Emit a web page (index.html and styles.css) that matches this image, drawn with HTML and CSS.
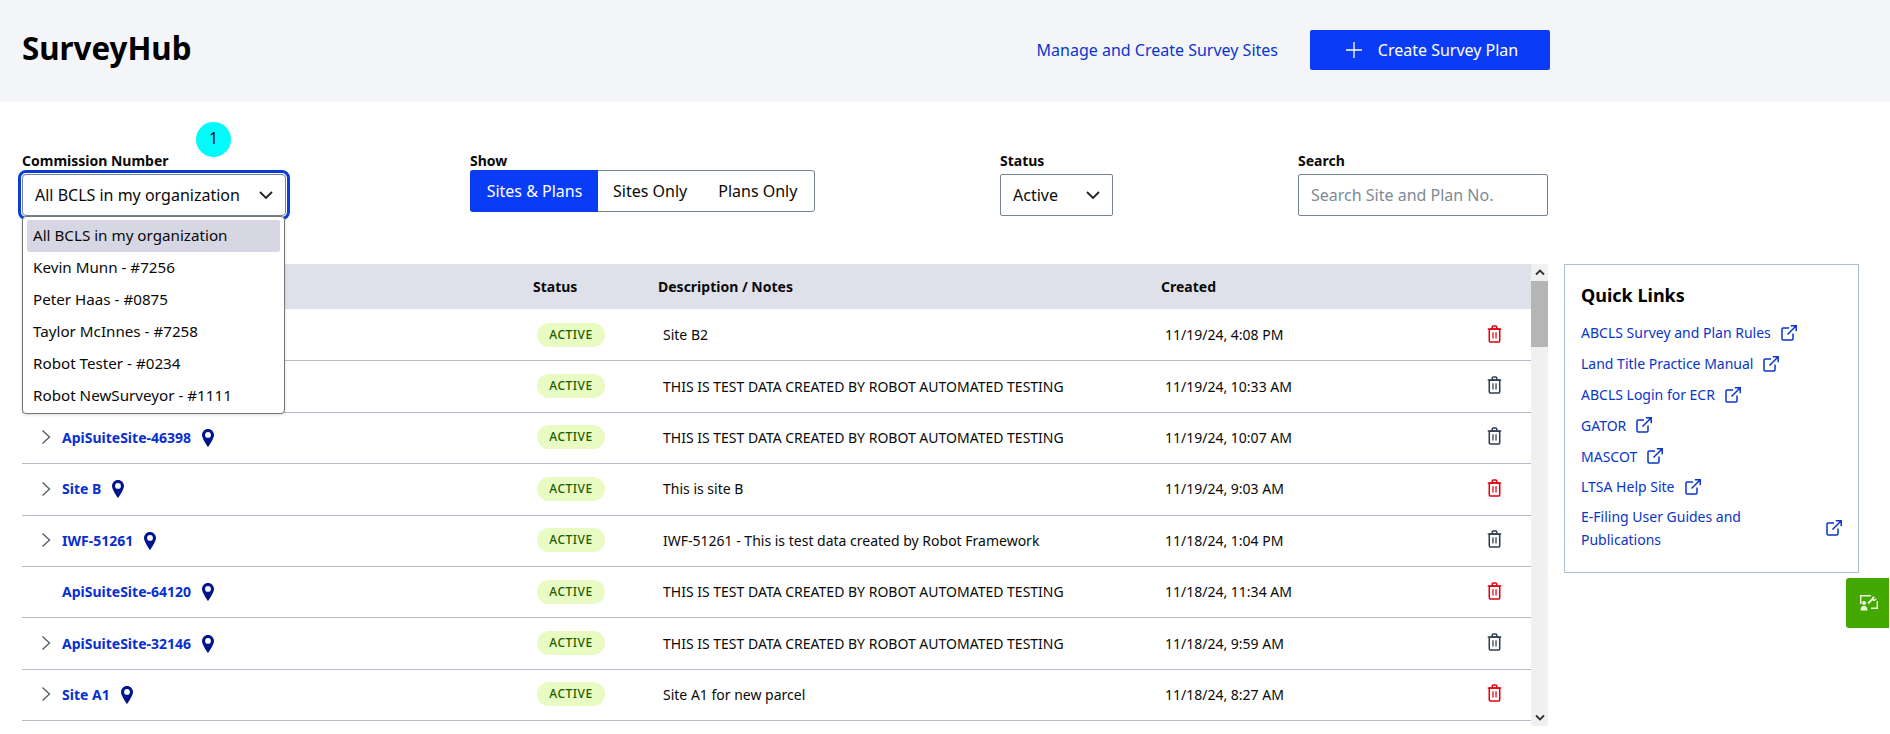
FILE: index.html
```html
<!DOCTYPE html>
<html lang="en">
<head>
  <meta charset="UTF-8">
  <title>SurveyHub</title>
  <link rel="stylesheet" href="styles.css">
</head>
<body>
  <!-- Shared icons -->
  <svg class="icon-defs" width="0" height="0">
    <symbol id="i-pin" viewBox="0 0 12 18">
      <path fill-rule="evenodd" d="M6 0C2.7 0 0 2.7 0 6c0 4 6 12 6 12s6-8 6-12c0-3.3-2.7-6-6-6zm0 8.800A2.900 2.900 0 1 1 6 3a2.900 2.900 0 0 1 0 5.800z"/>
    </symbol>
    <symbol id="i-caret" viewBox="0 0 10 16">
      <polyline points="1.5,1.5 8.5,8 1.5,14.5" fill="none" stroke="currentColor" stroke-width="1.4"/>
    </symbol>
    <symbol id="i-down" viewBox="0 0 14 8">
      <polyline points="1,1 7,7 13,1" fill="none" stroke="currentColor" stroke-width="1.8"/>
    </symbol>
    <symbol id="i-trash" viewBox="0 0 16 20">
      <g fill="none" stroke="currentColor" stroke-width="1.7">
        <path d="M0.5 4.5h15"/>
        <path d="M5.5 4V2.2Q5.5 1 6.7 1h2.6q1.200 0 1.200 1.200V4"/>
        <rect x="2.200" y="4.500" width="11.600" height="14.500" rx="1.600"/>
        <path d="M6.300 8v7M9.700 8v7" stroke-width="1.400"/>
      </g>
    </symbol>
    <symbol id="i-ext" viewBox="0 0 16 16">
      <g fill="none" stroke="currentColor" stroke-width="1.5">
        <path d="M8 3H2.200Q1 3 1 4.200v9.600Q1 15 2.200 15h8.600q1.200 0 1.200-1.200V8.500"/>
        <path d="M6.500 9.500L15 1M9.800 0.800H15.200V6.200"/>
      </g>
    </symbol>
  </svg>

  <!-- Header -->
  <header class="top-bar">
    <h1 class="brand">SurveyHub</h1>
    <div class="top-actions">
      <a class="top-link" href="#">Manage and Create Survey Sites</a>
      <button class="create-btn">
        <svg class="plus" viewBox="0 0 16 16"><path d="M8 0v16M0 8h16" stroke="currentColor" stroke-width="1.3"/></svg>
        Create Survey Plan
      </button>
    </div>
  </header>

  <main class="page">
    <!-- Filters -->
    <div class="filters">
      <div class="filter commission">
        <span class="tour-dot">1</span>
        <label class="filter-label">Commission Number</label>
        <div class="select open">
          <span>All BCLS in my organization</span>
          <svg class="select-arrow"><use href="#i-down"/></svg>
        </div>
        <ul class="dropdown">
          <li class="selected">All BCLS in my organization</li>
          <li>Kevin Munn - #7256</li>
          <li>Peter Haas - #0875</li>
          <li>Taylor McInnes - #7258</li>
          <li>Robot Tester - #0234</li>
          <li>Robot NewSurveyor - #1111</li>
        </ul>
      </div>
      <div class="filter">
        <label class="filter-label show-label">Show</label>
        <div class="toggle">
          <button class="toggle-btn active">Sites &amp; Plans</button>
          <button class="toggle-btn">Sites Only</button>
          <button class="toggle-btn">Plans Only</button>
        </div>
      </div>
      <div class="filter">
        <label class="filter-label">Status</label>
        <div class="select status-select">
          <span>Active</span>
          <svg class="select-arrow"><use href="#i-down"/></svg>
        </div>
      </div>
      <div class="filter">
        <label class="filter-label">Search</label>
        <input class="search" type="text" placeholder="Search Site and Plan No.">
      </div>
    </div>

    <div class="content">
      <!-- Sites table -->
      <section class="table-wrap">
        <div class="table">
          <div class="row head">
            <div></div>
            <div>Status</div>
            <div>Description / Notes</div>
            <div>Created</div>
            <div></div>
          </div>
          <!-- first two names sit behind the open dropdown -->
          <div class="row">
            <div class="name"></div>
            <div class="cell"><span class="badge">Active</span></div>
            <div class="cell">Site B2</div>
            <div class="cell">11/19/24, 4:08 PM</div>
            <div class="action"><svg class="trash red"><use href="#i-trash"/></svg></div>
          </div>
          <div class="row">
            <div class="name"></div>
            <div class="cell"><span class="badge">Active</span></div>
            <div class="cell">THIS IS TEST DATA CREATED BY ROBOT AUTOMATED TESTING</div>
            <div class="cell">11/19/24, 10:33 AM</div>
            <div class="action"><svg class="trash"><use href="#i-trash"/></svg></div>
          </div>
          <div class="row">
            <div class="name"><svg class="caret"><use href="#i-caret"/></svg><a href="#">ApiSuiteSite-46398</a><svg class="pin"><use href="#i-pin"/></svg></div>
            <div class="cell"><span class="badge">Active</span></div>
            <div class="cell">THIS IS TEST DATA CREATED BY ROBOT AUTOMATED TESTING</div>
            <div class="cell">11/19/24, 10:07 AM</div>
            <div class="action"><svg class="trash"><use href="#i-trash"/></svg></div>
          </div>
          <div class="row">
            <div class="name"><svg class="caret"><use href="#i-caret"/></svg><a href="#">Site B</a><svg class="pin"><use href="#i-pin"/></svg></div>
            <div class="cell"><span class="badge">Active</span></div>
            <div class="cell">This is site B</div>
            <div class="cell">11/19/24, 9:03 AM</div>
            <div class="action"><svg class="trash red"><use href="#i-trash"/></svg></div>
          </div>
          <div class="row">
            <div class="name"><svg class="caret"><use href="#i-caret"/></svg><a href="#">IWF-51261</a><svg class="pin"><use href="#i-pin"/></svg></div>
            <div class="cell"><span class="badge">Active</span></div>
            <div class="cell">IWF-51261 - This is test data created by Robot Framework</div>
            <div class="cell">11/18/24, 1:04 PM</div>
            <div class="action"><svg class="trash"><use href="#i-trash"/></svg></div>
          </div>
          <div class="row">
            <div class="name"><span class="caret"></span><a href="#">ApiSuiteSite-64120</a><svg class="pin"><use href="#i-pin"/></svg></div>
            <div class="cell"><span class="badge">Active</span></div>
            <div class="cell">THIS IS TEST DATA CREATED BY ROBOT AUTOMATED TESTING</div>
            <div class="cell">11/18/24, 11:34 AM</div>
            <div class="action"><svg class="trash red"><use href="#i-trash"/></svg></div>
          </div>
          <div class="row">
            <div class="name"><svg class="caret"><use href="#i-caret"/></svg><a href="#">ApiSuiteSite-32146</a><svg class="pin"><use href="#i-pin"/></svg></div>
            <div class="cell"><span class="badge">Active</span></div>
            <div class="cell">THIS IS TEST DATA CREATED BY ROBOT AUTOMATED TESTING</div>
            <div class="cell">11/18/24, 9:59 AM</div>
            <div class="action"><svg class="trash"><use href="#i-trash"/></svg></div>
          </div>
          <div class="row">
            <div class="name"><svg class="caret"><use href="#i-caret"/></svg><a href="#">Site A1</a><svg class="pin"><use href="#i-pin"/></svg></div>
            <div class="cell"><span class="badge">Active</span></div>
            <div class="cell">Site A1 for new parcel</div>
            <div class="cell">11/18/24, 8:27 AM</div>
            <div class="action"><svg class="trash red"><use href="#i-trash"/></svg></div>
          </div>
        </div>
        <div class="scrollbar">
          <svg class="scroll-arrow" viewBox="0 0 10 6"><polyline points="1,5 5,1 9,5" fill="none" stroke="#333" stroke-width="1.8"/></svg>
          <div class="scroll-track"><div class="scroll-thumb"></div></div>
          <svg class="scroll-arrow" viewBox="0 0 10 6"><polyline points="1,1 5,5 9,1" fill="none" stroke="#333" stroke-width="1.8"/></svg>
        </div>
      </section>

      <!-- Quick links -->
      <aside class="quick-links">
        <h3>Quick Links</h3>
        <a class="q-link" href="#">ABCLS Survey and Plan Rules<svg class="ext"><use href="#i-ext"/></svg></a>
        <a class="q-link" href="#">Land Title Practice Manual<svg class="ext"><use href="#i-ext"/></svg></a>
        <a class="q-link" href="#">ABCLS Login for ECR<svg class="ext"><use href="#i-ext"/></svg></a>
        <a class="q-link" href="#">GATOR<svg class="ext"><use href="#i-ext"/></svg></a>
        <a class="q-link" href="#">MASCOT<svg class="ext"><use href="#i-ext"/></svg></a>
        <a class="q-link" href="#">LTSA Help Site<svg class="ext"><use href="#i-ext"/></svg></a>
        <a class="q-link wrap" href="#"><span>E-Filing User Guides and<br>Publications</span><svg class="ext"><use href="#i-ext"/></svg></a>
      </aside>
    </div>
  </main>

  <!-- Floating support tab -->
  <button class="float-tab">
    <svg class="tab-icon" viewBox="0 0 18 16">
      <path fill="none" stroke="#edf8e0" stroke-width="1.4" d="M0.7 9V0.7H11M17.300 6V13.300H11"/>
      <path fill="none" stroke="#edf8e0" stroke-width="1.800" d="M8 8.500L13 3.500"/>
      <path fill="#edf8e0" d="M12 2.500a2.600 2.600 0 0 1 3.200-.8l-1.700 1.700 1.200 1.200 1.700-1.700a2.600 2.600 0 0 1-3.700 2.900z"/>
      <circle cx="4" cy="8" r="2" fill="#edf8e0"/>
      <path fill="#edf8e0" d="M0.500 15.500c0-3 1.500-4.800 3.500-4.800s3.500 1.800 3.500 4.800z"/>
    </svg>
  </button>
</body>
</html>
```

FILE: styles.css
```css
* { box-sizing: border-box; }
html, body { height: 100%; }
body { margin: 0; overflow: hidden; background: #fff; color: #0a0a0a; font-family: "Noto Sans", sans-serif; font-size: 14px; }
a { color: #0a35c8; text-decoration: none; }
button { font-family: inherit; white-space: nowrap; }
.icon-defs { position: absolute; }

.top-bar { height: 102px; background: #f3f5f9; display: flex; justify-content: space-between; align-items: center; padding: 0 340px 2px 22px; }
.brand { margin: -2px 0 0; font-size: 31.3px; font-weight: 700; color: #000; line-height: 1; }
.top-actions { display: flex; align-items: center; gap: 32px; }
.top-link { font-size: 16px; color: #0a35d0; }
.create-btn { width: 240px; height: 40px; background: #0a3cf5; color: #fff; border: none; border-radius: 2px; font-size: 16px; display: flex; align-items: center; justify-content: center; gap: 16px; padding: 0 0 0 4px; }
.plus { width: 16px; height: 16px; }

.page { padding: 49px 0 0 22px; }
.filters { display: grid; grid-template-columns: 448px 530px 298px 250px; height: 65px; margin-bottom: 48px; }
.filter { position: relative; }
.filter-label { display: block; font-size: 14px; font-weight: 700; line-height: 20px; margin-bottom: 3px; }
.show-label { margin-bottom: -1px; }

.tour-dot { position: absolute; left: 174px; top: -29px; width: 35px; height: 35px; border-radius: 50%; background: #00fbfb; font-size: 16px; line-height: 33px; text-align: center; z-index: 3; }

.select { height: 42px; width: 264px; border: 1px solid #77838f; border-radius: 2px; background: #fff; font-size: 16px; display: flex; align-items: center; justify-content: space-between; padding: 0 12px 0 12px; }
.select.open { outline: 3px solid #0b3ed6; outline-offset: 1px; border-radius: 4px; }
.status-select { width: 113px; }
.select-arrow { width: 14px; height: 8px; color: #222; }

.dropdown { position: absolute; left: 0; top: 65px; width: 263px; height: 198px; margin: 0; padding: 3px 4px 0; list-style: none; background: #fff; border: 1px solid #777; border-radius: 4px; box-shadow: 0 1px 3px rgba(0,0,0,0.15); font-size: 15.2px; z-index: 2; }
.dropdown li { height: 32px; line-height: 31px; padding: 0 6px; border-radius: 2px; }
.dropdown li.selected { background: #d6d7e3; }

.toggle { display: flex; width: 345px; height: 42px; border: 1px solid #77838f; border-radius: 3px; }
.toggle-btn { border: none; background: none; color: inherit; font-size: 16px; padding: 0 16px 0 15px; height: 40px; }
.toggle-btn.active { background: #0a3cf5; color: #fff; width: 128px; height: 42px; margin: -1px 0 -1px -1px; padding: 0 0 0 1px; border-radius: 3px 0 0 3px; }

.search { display: block; width: 250px; height: 42px; border: 1px solid #77838f; border-radius: 2px; padding: 0 12px; font-family: inherit; font-size: 16px; outline: none; }
.search::placeholder { color: #7d8a95; opacity: 1; }

.content { display: flex; align-items: flex-start; gap: 16px; }
.table-wrap { width: 1526px; height: 462px; display: flex; overflow: hidden; }
.table { width: 1509px; }
.row { display: grid; grid-template-columns: 511px 126px 502px 309px 48px; padding: 0 13px 1px 0; height: 51.4px; align-items: center; border-bottom: 1px solid #b5bdc9; }
.row.head { height: 45px; margin-bottom: 1px; padding-bottom: 0; background: #dee1ea; border-bottom: none; font-weight: 700; }
.head div:nth-child(3) { margin-left: -1px; }
.name { display: flex; align-items: center; padding-left: 19px; font-weight: 700; }
.name a { color: #0a2fd0; }
.caret { width: 10px; height: 16px; margin-right: 11px; color: #55606c; display: block; }
.pin { width: 12px; height: 18px; margin: 1px 0 0 11px; fill: #00148c; }
.cell { padding-left: 4px; }
.badge { display: inline-block; width: 68px; height: 24px; line-height: 24px; border-radius: 12px; background: #e7fbc2; color: #1d5c00; font-size: 12px; font-weight: 500; letter-spacing: 0.5px; text-transform: uppercase; text-align: center; }
.action { text-align: center; line-height: 0; margin-top: -2px; }
.trash { width: 15px; height: 18px; color: #2f3e4e; }
.trash.red { color: #e2000f; }

.scrollbar { width: 17px; height: 462px; background: #f0f0f0; display: flex; flex-direction: column; align-items: center; }
.scroll-arrow { width: 10px; height: 17px; flex: none; }
.scroll-track { flex: 1; width: 100%; }
.scroll-thumb { height: 66px; background: #b5b5b5; }

.quick-links { width: 295px; height: 309px; border: 1px solid #b0bfcc; padding: 18px 16px 0; }
.quick-links h3 { margin: 0 0 10.6px; font-size: 18px; font-weight: 700; line-height: 24px; color: #000; }
.q-link { display: flex; align-items: center; gap: 10px; height: 30.8px; font-size: 14px; color: #0a35c8; }
.q-link.wrap { justify-content: space-between; height: auto; line-height: 23px; margin-top: 3px; }
.ext { width: 16px; height: 16px; flex: none; }

.float-tab { position: fixed; right: 1px; top: 578px; width: 43px; height: 50px; background: #43a800; border: none; border-radius: 3px 0 0 3px; padding: 0 0 0 3px; display: flex; align-items: center; justify-content: center; }
.tab-icon { width: 18px; height: 16px; }
```
